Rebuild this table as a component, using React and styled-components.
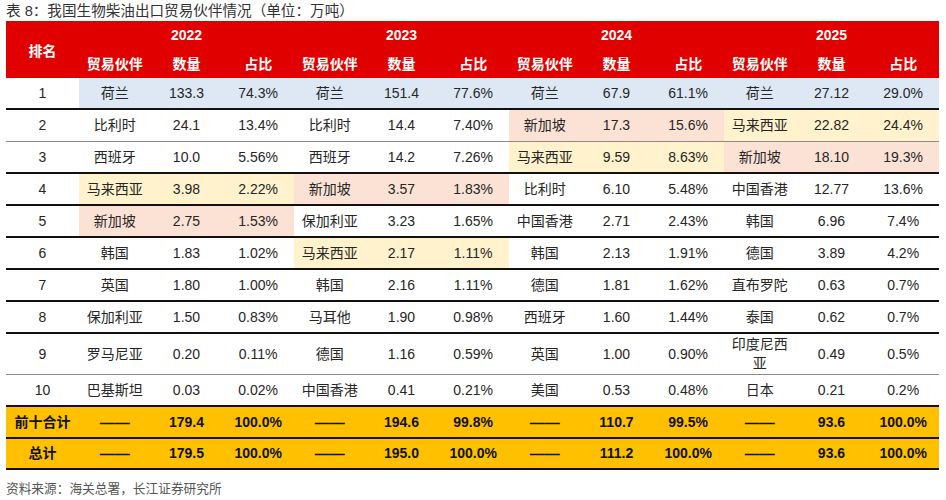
import React from "react";
import styled, { createGlobalStyle } from "styled-components";

const GlobalStyle = createGlobalStyle`
  html, body { margin: 0; padding: 0; background: #fff; }
  body { font-family: "Liberation Sans", "Noto Sans CJK SC", sans-serif; }
`;

const FONT = `"Liberation Sans", "Noto Sans CJK SC", sans-serif`;
const COLS = "73px repeat(12, 1fr)";

const Page = styled.div`
  width: 946px;
  padding: 2px 0 0 6px;
  box-sizing: border-box;
`;

const Title = styled.div`
  font-family: ${FONT};
  font-size: 14.6px;
  line-height: 19px;
  color: #333;
  white-space: pre;
`;

const Table = styled.div`
  width: 933px;
  display: flex;
  flex-direction: column;
`;

const Header = styled.div`
  display: grid;
  grid-template-columns: ${COLS};
  grid-template-rows: 27px 30px;
  background: #e00000;
  color: #fff;
  font-family: ${FONT};
  font-weight: bold;
  font-size: 14px;
`;

const HeadCell = styled.div`
  display: flex;
  align-items: center;
  justify-content: center;
  grid-row: ${(p) => p.$row || "auto"};
  grid-column: ${(p) => p.$col || "auto"};
`;

const Row = styled.div`
  display: grid;
  grid-template-columns: ${COLS};
  height: ${(p) => p.$h}px;
  box-sizing: border-box;
  border-bottom: ${(p) => (p.$thin ? "1px solid #8a8a8a" : "2px solid #111")};
  background: ${(p) => (p.$total ? "#ffc000" : "transparent")};
  font-family: ${FONT};
  font-size: 14px;
  font-weight: ${(p) => (p.$total ? "bold" : "normal")};
  color: ${(p) => (p.$total ? "#111" : "#262626")};
`;

const Cell = styled.div`
  display: flex;
  align-items: center;
  justify-content: center;
  text-align: center;
  padding: 0 6px;
  line-height: 19px;
  background: ${(p) => p.$bg || "transparent"};
`;

const Dash = styled.span`
  font-size: 15px;
  letter-spacing: 0;
`;

const Group = styled.div`
  display: contents;
`;

const Source = styled.div`
  margin-top: 11px;
  font-family: ${FONT};
  font-size: 12.7px;
  line-height: 16px;
  color: #555;
`;

const BLUE = "#dde8f4";
const YEL = "#fff2cc";
const PEACH = "#fbe2d5";

const years = ["2022", "2023", "2024", "2025"];

const rows = [
  { r: "1", bgAll: BLUE, g: [["荷兰", "133.3", "74.3%"], ["荷兰", "151.4", "77.6%"], ["荷兰", "67.9", "61.1%"], ["荷兰", "27.12", "29.0%"]] },
  { r: "2", thin: true, g: [["比利时", "24.1", "13.4%"], ["比利时", "14.4", "7.40%"], ["新加坡", "17.3", "15.6%", PEACH], ["马来西亚", "22.82", "24.4%", YEL]] },
  { r: "3", g: [["西班牙", "10.0", "5.56%"], ["西班牙", "14.2", "7.26%"], ["马来西亚", "9.59", "8.63%", YEL], ["新加坡", "18.10", "19.3%", PEACH]] },
  { r: "4", g: [["马来西亚", "3.98", "2.22%", YEL], ["新加坡", "3.57", "1.83%", PEACH], ["比利时", "6.10", "5.48%"], ["中国香港", "12.77", "13.6%"]] },
  { r: "5", g: [["新加坡", "2.75", "1.53%", PEACH], ["保加利亚", "3.23", "1.65%"], ["中国香港", "2.71", "2.43%"], ["韩国", "6.96", "7.4%"]] },
  { r: "6", g: [["韩国", "1.83", "1.02%"], ["马来西亚", "2.17", "1.11%", YEL], ["韩国", "2.13", "1.91%"], ["德国", "3.89", "4.2%"]] },
  { r: "7", g: [["英国", "1.80", "1.00%"], ["韩国", "2.16", "1.11%"], ["德国", "1.81", "1.62%"], ["直布罗陀", "0.63", "0.7%"]] },
  { r: "8", g: [["保加利亚", "1.50", "0.83%"], ["马耳他", "1.90", "0.98%"], ["西班牙", "1.60", "1.44%"], ["泰国", "0.62", "0.7%"]] },
  { r: "9", h: 41, thin: true, g: [["罗马尼亚", "0.20", "0.11%"], ["德国", "1.16", "0.59%"], ["英国", "1.00", "0.90%"], ["印度尼西亚", "0.49", "0.5%"]] },
  { r: "10", g: [["巴基斯坦", "0.03", "0.02%"], ["中国香港", "0.41", "0.21%"], ["美国", "0.53", "0.48%"], ["日本", "0.21", "0.2%"]] },
];

const totals = [
  { r: "前十合计", h: 32, g: [["179.4", "100.0%"], ["194.6", "99.8%"], ["110.7", "99.5%"], ["93.6", "100.0%"]] },
  { r: "总计", h: 31, g: [["179.5", "100.0%"], ["195.0", "100.0%"], ["111.2", "100.0%"], ["93.6", "100.0%"]] },
];

export default function App() {
  return (
    <>
      <GlobalStyle />
      <Page>
        <Title>表 8：我国生物柴油出口贸易伙伴情况（单位：万吨）</Title>
        <Table>
          <Header>
            <HeadCell $row="1 / span 2" $col="1">排名</HeadCell>
            {years.map((y, i) => (
              <HeadCell key={y} $row="1" $col={`${2 + i * 3} / span 3`}>
                {y}
              </HeadCell>
            ))}
            {years.map((y, i) => (
              <Group key={"s" + y}>
                <HeadCell $row="2" $col={`${2 + i * 3}`}>贸易伙伴</HeadCell>
                <HeadCell $row="2" $col={`${3 + i * 3}`}>数量</HeadCell>
                <HeadCell $row="2" $col={`${4 + i * 3}`}>占比</HeadCell>
              </Group>
            ))}
          </Header>
          {rows.map((row) => (
            <Row key={row.r} $h={row.h || 32} $thin={row.thin}>
              <Cell>{row.r}</Cell>
              {row.g.map((c, i) => {
                const bg = c[3] || row.bgAll;
                return (
                  <Group key={i}>
                    <Cell $bg={bg}>{c[0]}</Cell>
                    <Cell $bg={bg}>{c[1]}</Cell>
                    <Cell $bg={bg}>{c[2]}</Cell>
                  </Group>
                );
              })}
            </Row>
          ))}
          {totals.map((row) => (
            <Row key={row.r} $h={row.h} $total>
              <Cell>{row.r}</Cell>
              {row.g.map((c, i) => (
                <Group key={i}>
                  <Cell>
                    <Dash>——</Dash>
                  </Cell>
                  <Cell>{c[0]}</Cell>
                  <Cell>{c[1]}</Cell>
                </Group>
              ))}
            </Row>
          ))}
        </Table>
        <Source>资料来源：海关总署，长江证券研究所</Source>
      </Page>
    </>
  );
}
